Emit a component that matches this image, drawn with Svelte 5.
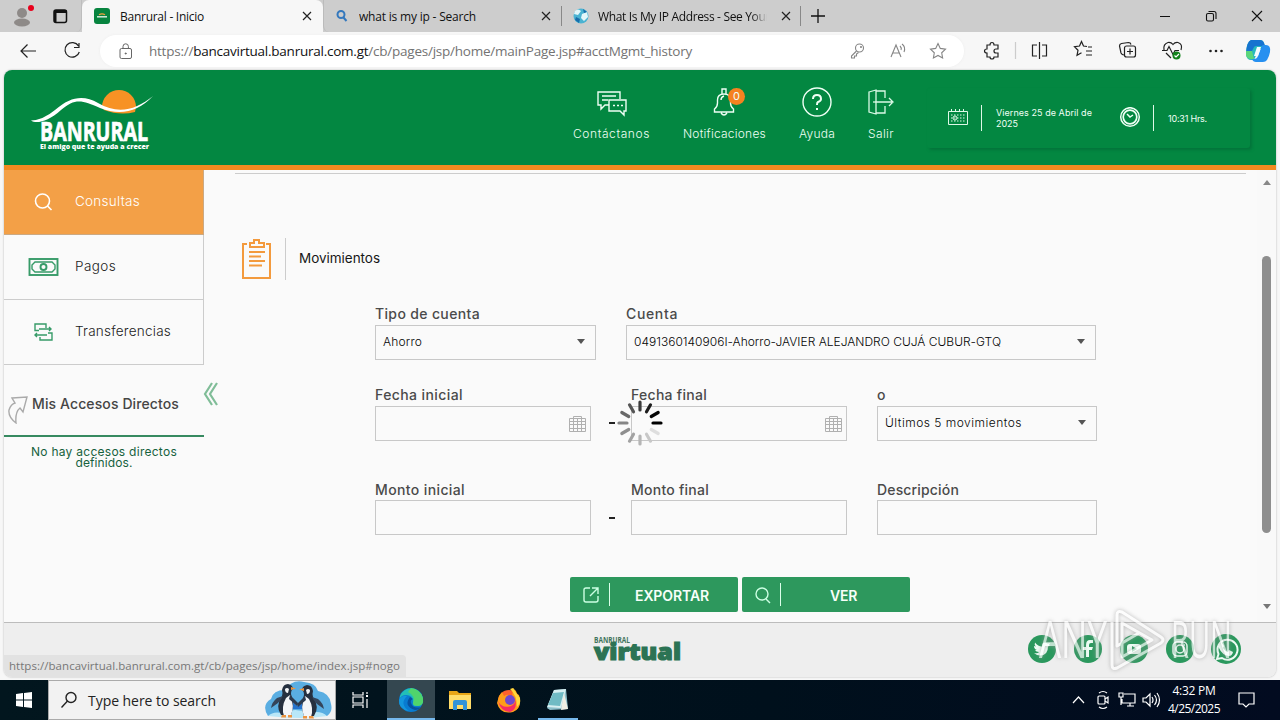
<script>
  // Spreads a label over the width given, by letter spacing.
  function fit(node, width) {
    const natural = node.getBoundingClientRect().width;
    node.style.letterSpacing = `${(width - natural) / node.textContent.length}px`;
  }
  const spokes = [
    [0, '#000'], [30, '#dedede'], [60, '#c8c8c8'], [90, '#b5b5b5'], [120, '#a2a2a2'], [150, '#8e8e8e'],
    [180, '#858585'], [210, '#696969'], [240, '#555'], [270, '#3c3c3c'], [300, '#1d1d1d'], [330, '#050505']
  ];
</script>

{#snippet calendar()}
  <svg class="cal" width="18" height="18" viewBox="0 0 18 18" fill="none" stroke="#b0b0b0"><path d="M1.500 3.500h16v13h-16zM1.500 6.500h16M1.500 9.500h16M1.500 13.500h16M5.500 3.500v13M9.500 3.500v13M13.500 3.500v13M5.500 3V1.500h8V3" /></svg>
{/snippet}
{#snippet closeX()}
  <svg class="x" width="10" height="10" viewBox="0 0 10 10" stroke="#222" stroke-width="1.2"><path d="M1 1l8 8M9 1L1 9" /></svg>
{/snippet}
{#snippet bird()}
  <path d="M17 34q-6-9 1-19 1-3 0-6 1-6 6-6 5 1 5 5-2 1-2 5 4 10 0 21z" fill="#26303f" />
  <path d="M20 35q-3-9 2-18l4-3q5 11 1 20-2 3-7 1zM21 8q2-2 4 0l-1 4q-3 0-3-4z" fill="#f3f5f8" />
  <path d="M19 15q-1 3-5 7l-7 5q1-6 6-10z" fill="#34445a" />
  <path d="M26 14l8 8-1 3-8-7z" fill="#2c3a4e" />
  <path d="M27 6l5 1.500-5 1.500zM18 34h4v2.500h-5zM24 34h4v2.500h-4z" fill="#ec9440" />
{/snippet}

<div class="screen">
  <div class="tabs">
    <div class="profile">
      <svg width="68" height="32" viewBox="0 0 68 32"><circle cx="22" cy="13" r="5" fill="#8e8a88" /><ellipse cx="22" cy="22.500" rx="8" ry="4" fill="#8e8a88" /><circle cx="31" cy="8" r="3" fill="#e8001c" /><rect x="54" y="10" width="12.500" height="12.500" rx="2" fill="none" stroke="#111" stroke-width="1.5" /><path d="M54 10h12.500v3H54zM54 11h2.500v11H54z" fill="#111" /></svg>
    </div>
    <div class="tab active">
      <svg width="16" height="16" viewBox="0 0 16 16"><rect width="16" height="16" rx="3" fill="#07843f" /><path d="M5 6.800q3-2 6 0" stroke="#f3a03b" stroke-width="1.200" fill="none" /><path d="M3 8.800h10" stroke="#d5ecdc" stroke-width="1.500" /></svg>
      <span class="title"><span use:fit={84}>Banrural - Inicio</span></span>{@render closeX()}
    </div>
    <div class="tab second">
      <svg width="14" height="14" viewBox="0 0 14 14" fill="none" stroke="#3478bd" stroke-width="2"><circle cx="5" cy="5.500" r="3.500" /><path d="M7.500 8.500l3 3.500" /></svg>
      <span class="title"><span use:fit={117}>what is my ip - Search</span></span>{@render closeX()}
    </div>
    <div class="tab third">
      <svg width="16" height="16" viewBox="0 0 16 16"><circle cx="8" cy="8" r="7.500" fill="#4bb3d2" /><path d="M2 3q3-3 6 0l-3 4-4-1zM9 6l5-2 1 5-4 4-3-3z" fill="#e3f7fa" /><path d="M3 9l4 2-1 4-4-3zM10 1l4 3-3 1z" fill="#176daa" /></svg>
      <span class="title fade"><span use:fit={172}>What Is My IP Address - See Your</span></span>{@render closeX()}
    </div>
    <svg class="plus" width="14" height="14" viewBox="0 0 14 14" stroke="#111" stroke-width="1.3"><path d="M7 0v14M0 7h14" /></svg>
    <svg class="win" width="103" height="14" viewBox="0 0 103 14" fill="none" stroke="#111" stroke-width="1.100"><path d="M0 7.500h10M92 2l10 10M102 2L92 12" /><rect x="46.500" y="4.500" width="7" height="7.500" rx="1.500" /><path d="M48.500 2.500h5.500q2 0 2 2V10" /></svg>
  </div>

  <div class="toolbar">
    <svg class="navs" width="64" height="20" viewBox="0 0 64 20" fill="none" stroke="#222" stroke-width="1.200"><path d="M17 10H2M8.500 3.500L2 10l6.500 6.500M59.500 5A7.300 7.300 0 1 0 60.300 11M60 2v4.500h-5" /></svg>
    <div class="address">
      <svg width="14" height="17" viewBox="0 0 14 17" fill="none" stroke="#666"><rect x="1" y="5.500" width="11.500" height="10" rx="1.500" /><path d="M4 5V3.500a2.700 2.700 0 0 1 5.400 0V5" /><circle cx="6.750" cy="10.500" r=".6" fill="#555" /></svg>
      <span class="url" use:fit={543}>https://<b>bancavirtual.banrural.com.gt</b>/cb/pages/jsp/home/mainPage.jsp#acctMgmt_history</span>
      <svg class="addricons" width="98" height="20" viewBox="0 0 98 20" fill="none" stroke="#858585" stroke-width="1.100"><circle cx="9.500" cy="7" r="4" /><circle cx="11" cy="6" r=".5" /><path d="M6.500 10L1.500 15v2h3v-2h2v-2l2-1.500M41 16l5-12 5 12M43 12h6M50 5q2 2 1 4M52 3q4 3 2 8M88 2.500l2.300 4.900 5.200.7-3.800 3.700.9 5.200-4.600-2.500-4.600 2.500.9-5.200-3.800-3.700 5.200-.7z" /></svg>
    </div>
    <svg class="tools" width="300" height="28" viewBox="0 0 300 28" fill="none" stroke="#222" stroke-width="1.200">
      <path d="M7 8h3q0-2.500 2-2.500T14 8h4v4h-2q-2 0-2 2t2 2h2v4h-4q0 2-2 2t-2-2H7v-4q-2.500 0-2.500-2T7 12z" />
      <path d="M35.500 5v17" stroke="#ccc" />
      <path d="M57 8h-4.500v11H57M62 8h4.500v11H62M59.500 5v17" />
      <g transform="translate(1 1)"><path d="M106 8.500l-3.500-.5-2-4.500-2 4.500-5 .7 3.500 3.600-1 5 4.500-2.500M107 9h4M105 13h6M105 17h6" />
      <path d="M143 17q-2 0-3-2l-1.500-7q0-2 2-2.500l7-1q2 0 2.500 2" /><rect x="143.500" y="8" width="11" height="11" rx="2" /><path d="M149 10.500v6M146 13.500h6" /></g>
      <path d="M184 13q-1-6 4-7.500 3-.5 5 2 2-2.500 5-2 5 1.500 3 7.500M182 13.500h5l2-4 4 8 2-4h4M186 16l5 5" /><circle cx="196.500" cy="18.500" r="4" fill="#12831b" stroke="none" /><path d="M194.500 18.500l1.500 1.500 3-3" stroke="#fff" />
      <g fill="#222" stroke="none"><circle cx="230.500" cy="14" r="1.300" /><circle cx="236" cy="14" r="1.300" /><circle cx="241.500" cy="14" r="1.300" /></g>
      <g stroke="none"><path d="M271 3h9q3 0 4 3l2 6h-7l-5 11h-3q-4 0-5-5 0-13 5-15z" fill="#28b9bd" /><path d="M271 3h9q3 0 4 3l1 3h-9q-2 0-3 3l-2 4h-5q1-12 5-13z" fill="#1774d0" /><path d="M283 8h3q5 0 4 7-2 10-7 10h-7q-3 0-4-3h2q3 0 4-3l3-8q1-3 2-3z" fill="#2790f0" /><path d="M266 14h6l2 8h-3q-4 0-5-4z" fill="#5dd67b" /><path d="M277 10h4l-3 9h-4z" fill="#f5fbff" /></g>
    </svg>
  </div>

  <div class="page">
    <header>
      <svg class="logo" width="124" height="64" viewBox="0 0 124 64">
        <path d="M71 19a17 17 0 0 1 34 0l-1 5q-15 4-31-2z" fill="#f79224" /><path d="M0 32.500Q12 32 24 22C40 8 53 7 67 15c20 12 38 7 55-7C107 24 89 28 69 20 51 12 44 10 30 22 17 34 5 36 0 32.500z" fill="#fff" />
        <text x="9" y="53" textLength="108" lengthAdjust="spacingAndGlyphs" class="brand">BANRURAL</text><text x="9" y="60.500" textLength="109" lengthAdjust="spacingAndGlyphs" class="motto">El amigo que te ayuda a crecer</text>
      </svg>
      <nav>
        <a><svg width="32" height="30" viewBox="0 0 32 30" fill="none" stroke="#effff5" stroke-width="1.400"><path d="M13 18H9l-4 4v-4H2V5h22v7M6 9h14M6 13h6" /><path d="M13 13h17v11h-2v4l-4-4H13z" /><path d="M17 18.500h2M21 18.500h2M25 18.500h2" /></svg><span use:fit={77}>Contáctanos</span></a>
        <a class="bell"><svg width="32" height="30" viewBox="0 0 32 30" fill="none" stroke="#effff5" stroke-width="1.400"><path d="M5.500 25v-3q3-2 3-6v-3q0-6 6.500-6t6.500 6v3q0 4 3 6v3zM13 7V2h4v5M12 13q0-3 3-4M12 26q3 4 6 0" /></svg><i>0</i><span use:fit={83}>Notificaciones</span></a>
        <a><svg width="32" height="30" viewBox="0 0 32 30" fill="none" stroke="#effff5" stroke-width="1.400"><circle cx="16" cy="15" r="14" /><path d="M12 12q0-4 4-4t4 4q0 2-3 3-1 .5-1 3M16 21v2" stroke-width="2" /></svg><span use:fit={36}>Ayuda</span></a>
        <a><svg width="32" height="30" viewBox="0 0 32 30" fill="none" stroke="#dbfae6" stroke-width="1.300"><path d="M11 4h9v7M20 19v7h-9M4 5l7-2v24l-7-2zM10 15h17M24 11l4 4-4 4M9 14v2" /></svg><span use:fit={26}>Salir</span></a>
      </nav>
      <div class="datebox">
        <svg width="22" height="18" viewBox="0 0 22 18" fill="none" stroke="#dff8e7"><path d="M1.500 2.500h19v13h-19zM4.500 0v3M8.500 0v3M12.500 0v3M16.500 0v3" /><path d="M4 6h14M4 9h14M4 12h14" stroke-dasharray="1.500 1.500" /><circle cx="8" cy="9" r="2" /></svg>
        <div class="vbar"></div>
        <div class="date"><span use:fit={96}>Viernes 25 de Abril de</span><br /><span use:fit={22}>2025</span></div>
        <svg width="22" height="22" viewBox="0 0 22 22" fill="none" stroke="#effff5"><circle cx="11" cy="10" r="9.300" stroke-width="1.500" /><circle cx="11" cy="10" r="6.800" stroke-width="1.700" /><path d="M8 7l3 3 3-2" stroke-width="1.500" /></svg>
        <div class="vbar two"></div><div class="hour"><span use:fit={39}>10:31 Hrs.</span></div>
      </div>
    </header>
    <div class="content">
      <aside>
        <div class="item on"><svg width="34" height="24" viewBox="0 0 34 24" fill="none" stroke="#fff" stroke-width="1.600"><circle cx="15.500" cy="11" r="7" /><path d="M20.500 16l4 4" /></svg><span use:fit={65}>Consultas</span></div>
        <div class="item"><svg width="34" height="24" viewBox="0 0 34 24" fill="none" stroke="#379b68" stroke-width="1.900"><rect x="2.500" y="4" width="28" height="16" /><path d="M8 7h17l3 3v4l-3 3H8l-3-3v-4z" stroke-width="1.400" /><circle cx="16.500" cy="12" r="3" /></svg><span use:fit={41}>Pagos</span></div>
        <div class="item"><svg width="34" height="24" viewBox="0 0 34 24" fill="none" stroke="#379b68" stroke-width="1.400"><path d="M12 10.500H8V4h11v4M12 9h12M22 7l2 2-2 2M8 15h12M10 13l-2 2 2 2M13 17v3h12v-7h-4" /></svg><span use:fit={96}>Transferencias</span></div>
        <div class="shortcuts"><svg width="24" height="30" viewBox="0 0 24 30" fill="none" stroke="#aaa" stroke-width="1.400"><path d="M7 4l15-1-4 15-3-4q-5 4-4 15Q3 23 4 16q2-6 6-7z" /></svg><span use:fit={147}>Mis Accesos Directos</span></div>
        <p><span use:fit={146}>No hay accesos directos</span><br /><span use:fit={57}>definidos.</span></p>
        <svg class="collapse" width="16" height="24" viewBox="0 0 16 24" fill="none" stroke="#80bd98" stroke-width="2.200"><path d="M10 1L3 12l7 11M15 1L8 12l7 11" /></svg>
      </aside>
      <main>
        <div class="rule"></div>
        <div class="heading"><svg width="30" height="42" viewBox="0 0 30 42" fill="none" stroke="#f39a3d" stroke-width="2"><path d="M5 6H1v34h27V6h-4M8 5h4V2h5v3h5v4H8zM7 14h16M7 18.500h12M7 23h16M7 27.500h13" /></svg><div class="line"></div><span use:fit={81}>Movimientos</span></div>
        <div class="form">
          <div class="row one">
            <div class="field"><label><span use:fit={105}>Tipo de cuenta</span></label><div class="box select"><span use:fit={39}>Ahorro</span><i></i></div></div>
            <div class="field"><label><span use:fit={52}>Cuenta</span></label><div class="box select"><span use:fit={367}>0491360140906I-Ahorro-JAVIER ALEJANDRO CUJÁ CUBUR-GTQ</span><i></i></div></div>
          </div>
          <div class="row two">
            <div class="field"><label><span use:fit={88}>Fecha inicial</span></label><div class="box">{@render calendar()}</div></div><b class="dash"></b>
            <div class="field"><label><span use:fit={76}>Fecha final</span></label><div class="box">{@render calendar()}</div></div>
            <div class="field last"><label><span>o</span></label><div class="box select"><span use:fit={137}>Últimos 5 movimientos</span><i></i></div></div>
          </div>
          <div class="row three">
            <div class="field"><label><span use:fit={90}>Monto inicial</span></label><div class="box"></div></div><b class="dash"></b>
            <div class="field"><label><span use:fit={78}>Monto final</span></label><div class="box"></div></div>
            <div class="field last"><label><span use:fit={82}>Descripción</span></label><div class="box"></div></div>
          </div>
        </div>
        <div class="buttons">
          <button><svg width="20" height="20" viewBox="0 0 20 20" fill="none" stroke="#ccffe3" stroke-width="1.400"><path d="M9 3H5Q3 3 3 5v10q0 2 2 2h10q2 0 2-2v-4M11 3h6v6M17 3l-8 8" /></svg><i></i><span class="bt"><span use:fit={74}>EXPORTAR</span></span></button>
          <button><svg width="20" height="20" viewBox="0 0 20 20" fill="none" stroke="#ccffe3" stroke-width="1.400"><circle cx="9" cy="9" r="6" /><path d="M13 14l4 4" /></svg><i></i><span class="bt"><span use:fit={27}>VER</span></span></button>
        </div>
        <svg class="loader" width="46" height="46" viewBox="-23 -23 46 46">{#each spokes as [angle, color]}<line x1="13" x2="21" y1="0" y2="0" stroke={color} stroke-width="3.200" stroke-linecap="round" transform={`rotate(${angle})`} />{/each}</svg>
      </main>
      <div class="scroll"><i class="up"></i><div class="thumb"></div><i class="down"></i></div>
    </div>
    <footer>
      <svg class="virtual" width="90" height="32" viewBox="0 0 90 32"><text x="1" y="7.500" textLength="36" lengthAdjust="spacingAndGlyphs" class="small">BANRURAL</text><text x="1" y="25" textLength="87" lengthAdjust="spacingAndGlyphs" class="big">virtual</text></svg>
      <div class="social">
        <svg viewBox="0 0 28 28"><circle cx="14" cy="14" r="14" /><path d="M6 18q4 1 5-1-3 0-4-2h2q-3-1-3-4l2 .5q-2-2-1-4 3 4 7 4 0-4 3-4l3 1 2-.5-1 2 1 .5-2 1q0 9-8 9-3 0-6-2.500z" fill="#eefdf5" /></svg>
        <svg viewBox="0 0 28 28"><circle cx="14" cy="14" r="14" /><path d="M12 22v-7H9v-3h3v-2q0-5 4-5h3v3h-2q-2 0-2 2v2h4l-1 3h-3v7z" fill="#eefdf5" /></svg>
        <svg viewBox="0 0 28 28"><circle cx="14" cy="14" r="14" /><rect x="7" y="9" width="14" height="10" rx="3" fill="#eefdf5" /><path d="M12 11l5 3-5 3z" /></svg>
        <svg viewBox="0 0 28 28"><circle cx="14" cy="14" r="14" /><g fill="none" stroke="#eefdf5" stroke-width="1.500"><rect x="7" y="7" width="14" height="14" rx="4" /><circle cx="14" cy="14" r="4" /><path d="M18 10h1" /></g></svg>
        <svg class="wa" viewBox="0 0 30 30"><circle cx="15" cy="15" r="15" /><path d="M6 25l1.500-5A10 10 0 1 1 11 24z" fill="none" stroke="#eefdf5" stroke-width="2" /><path d="M11 9l2 3-1 2q2 3 5 4l1-2 4 2q-1 4-4 4-7-1-10-8-1-4 2-5z" fill="#eefdf5" /></svg>
      </div>
    </footer>
    <div class="status"><span use:fit={391}>https://bancavirtual.banrural.com.gt/cb/pages/jsp/home/index.jsp#nogo</span></div>
  </div>

  <div class="taskbar">
    <div class="start"><svg width="16" height="16" viewBox="0 0 16 16" fill="#fff"><path d="M0 2l7-1v6.500H0zM8 1l8-1v7.500H8zM0 8.500h7V15l-7-1zM8 8.500h8V16l-8-1z" /></svg></div>
    <div class="search"><svg width="18" height="18" viewBox="0 0 18 18" fill="none" stroke="#222" stroke-width="1.400"><circle cx="11" cy="6.500" r="5" /><path d="M7.500 10L1.500 16.500" /></svg><span use:fit={128}>Type here to search</span>
      <svg class="penguins" width="68" height="38" viewBox="0 0 68 38"><path d="M4 35Q-3 24 7 18q2-9 14-9Q28-2 40 1q12 1 14 9 12 2 13 13 2 8-4 12z" fill="#5aaee2" /><path d="M4 35q5-5 14-3 13-6 27 0 12-3 18 3-25 4-59 0z" fill="#b9e7f8" /><path d="M27 28l1-7 5 4 6-4 1 7z" fill="#2573cc" />
        <g>{@render bird()}</g><g transform="translate(67 1) scale(-1 1)">{@render bird()}</g></svg>
    </div>
    <div class="view"><svg width="18" height="18" viewBox="0 0 18 18" fill="none" stroke="#fff" stroke-width="1.200"><path d="M1 1v3h10V1M1 17v-3h10v3M1 6h10v6H1zM15 1v2M15 8v9" /><path d="M14 5h2" stroke-width="2" /></svg></div>
    <div class="app current"><svg width="26" height="26" viewBox="0 0 26 26"><circle cx="13" cy="13" r="12" fill="#087bd0" /><path d="M2 9Q7-1 17 2q8 3 8 12 0 5-7 5-4 0-3-4 0-7-7-7-4 0-6 3z" fill="#22bfb7" /><path d="M13 1q9 1 12 10 1 8-5 8-5 0-5-3 3-7-5-11z" fill="#50d46c" /><path d="M9 9q-8 8 2 15Q0 22 1 13q3-5 8-4z" fill="#1396dd" /><path d="M12 10q-7 9 5 13 4 0 6-3-8 2-10-4-1-3 2-4z" fill="#0752a0" /></svg></div>
    <div class="app"><svg width="24" height="24" viewBox="0 0 24 24"><path d="M1 3h8l2 2h12v16H1z" fill="#e8a516" /><path d="M1 7h22v14H1z" fill="#ffdc69" /><path d="M5 22v-8q0-2 2-2h10q2 0 2 2v8h-4v-5H9v5z" fill="#3193d8" /></svg></div>
    <div class="app"><svg width="26" height="26" viewBox="0 0 26 26"><circle cx="13" cy="14" r="11" fill="#ff612d" /><path d="M3 9l3-4 2 4q5-3 8 1l1-9q3 2 4 6l2 1q4 13-6 17-13 3-16-9z" fill="#ff9d19" /><path d="M14 2l3-1 4 6 3 4q1 6-3 9 0-12-7-18z" fill="#ffd83d" /><path d="M2 14q4 8 13 5 5-2 4-7 3 10-5 13-9 0-12-11z" fill="#f72c63" /><circle cx="14" cy="13" r="5" fill="#7048cf" /></svg></div>
    <div class="app note"><svg width="26" height="26" viewBox="0 0 26 26"><path d="M9 3l12-1 2 20-18 1-3-2z" fill="#8dbfca" /><path d="M9 3l12-1-5 19-14-1z" fill="#d7eff1" /><path d="M8 6l11-1-4 14-12-1z" fill="#70bbc4" /><path d="M19 6l4 16-7 1z" fill="#f0eee3" /></svg></div>
    <svg class="tray" width="90" height="22" viewBox="0 0 90 22" fill="none" stroke="#fff" stroke-width="1.200"><path d="M1 14l5.500-6 5.500 6M27 4q4-3 8 0M27 18q4 3 8 0" /><rect x="26" y="7" width="7" height="8" rx="1" /><path d="M33 10l3-2v6l-3-2M52 5h11v9H50V10M55 17h7M58 14v3M47 4h4v4h-4zM49 8v8M71 9h3l4-4v12l-4-4h-3zM80 8q2 3 0 6M82.500 6q4 5 0 10M85 4q5 7 0 14" /></svg>
    <div class="clock"><span use:fit={43}>4:32 PM</span><span use:fit={52}>4/25/2025</span></div>
    <svg class="notice" width="18" height="18" viewBox="0 0 18 18" fill="none" stroke="#fff" stroke-width="1.200"><path d="M1 2h15v11h-5l-3 3-3-3H1z" /></svg>
  </div>
  <svg class="watermark" width="210" height="80" viewBox="0 0 210 80"><text x="9" y="55" textLength="68" lengthAdjust="spacingAndGlyphs">ANY</text><text x="141" y="55" textLength="61" lengthAdjust="spacingAndGlyphs">RUN</text><path d="M82 19v43q0 5 5 3l44-25q4-3 0-6L92 9q-5-2-5 3v31l22-13M92 20v34l30-17z" /></svg>
</div>

<style>
  :global(body) { margin: 0; overflow: hidden; }
  * { box-sizing: border-box; }
  .screen { position: relative; width: 1280px; height: 720px; display: flex; flex-direction: column; background: #f7f7f7; font-family: "Open Sans", sans-serif; overflow: hidden; }
  span { white-space: nowrap; }
  svg { flex-shrink: 0; }
  .tabs { height: 32px; flex-shrink: 0; background: #cdcdcd; display: flex; align-items: center; font-size: 12px; color: #111; }
  .profile { width: 82px; height: 32px; border-right: 1px solid #bdbdbd; border-radius: 0 0 6px; }
  .tab { height: 32px; display: flex; align-items: center; }
  .active { width: 241px; background: #f7f7f7; padding: 0 11px 0 12px; border-radius: 7px 7px 0 0; }
  .title { flex: 1; margin-left: 10px; overflow: hidden; }
  .fade { -webkit-mask: linear-gradient(90deg, #000 91%, transparent); mask: linear-gradient(90deg, #000 91%, transparent); }
  .second { width: 238px; padding: 0 10px 0 12px; border-left: 1px solid #bbb; border-radius: 0 0 0 6px; }
  .second .title { margin-left: 9px; }
  .third { width: 240px; padding: 0 10px 0 12px; background: linear-gradient(#888, #888) 0 6px/1px 20px no-repeat, linear-gradient(#888, #888) 239px 6px/1px 20px no-repeat; }
  .third .title { margin: 0 14px 0 9px; }
  .plus { margin-left: 10px; }
  .win { margin-left: 335px; }
  .toolbar { height: 38px; flex-shrink: 0; display: flex; align-items: center; padding-left: 19px; }
  .address { width: 864px; height: 32px; margin-left: 17px; border-radius: 16px; background: #fff; display: flex; align-items: center; padding-left: 19px; box-shadow: 0 0 3px #eee; flex-shrink: 0; }
  .url { font-size: 13.500px; color: #737373; margin-left: 16px; line-height: 20px; }
  .url b { font-weight: 400; color: #111; }
  .addricons { margin-left: 158px; }
  .tools { margin-left: 16px; }
  .page { position: relative; height: 607px; margin: 0 4px 3px; border-radius: 8px; overflow: hidden; background: #fafafa; display: flex; flex-direction: column; font-family: Inter, sans-serif; box-shadow: 0 0 2px #aaa; }
  header { height: 100px; flex-shrink: 0; background: #038741; border-bottom: 5px solid #f38a20; display: flex; color: #effff5; }
  .logo { margin: 18px 0 0 27px; }
  .brand { font: 700 26px "Open Sans", sans-serif; fill: #fff; stroke: #fff; stroke-width: .7px; }
  .motto { font: 800 7px "Open Sans", sans-serif; fill: #fff; }
  nav { display: flex; gap: 33px; margin: 17px 0 0 418px; }
  nav a { display: flex; flex-direction: column; align-items: center; font-size: 12px; font-weight: 300; line-height: 18px; position: relative; }
  nav a > svg { margin: 0 -4px 8px; }
  .bell i { position: absolute; left: 45px; top: 1px; width: 17px; height: 17px; border-radius: 9px; background: #f58220; text-align: center; font: 11px/17px Inter, sans-serif; }
  .datebox { margin: 18px 0 0 33px; width: 323px; height: 60px; border-radius: 3px; box-shadow: 2px 2px 3px #03743a; display: flex; align-items: center; padding: 0 0 0 20px; font-size: 9px; line-height: 11px; }
  .vbar { width: 1px; height: 26px; background: #dff8e7; margin: 0 14px 0 12px; }
  .date { width: 123px; }
  .vbar.two { margin-left: 12px; }
  .content { height: 452px; display: flex; flex-shrink: 0; }
  aside { width: 200px; position: relative; }
  .item { height: 65px; display: flex; align-items: center; border: solid #ccc; border-width: 0 1px 1px 0; font-size: 13.500px; font-weight: 300; color: #222; padding-left: 23px; }
  .item span { margin-left: 14px; margin-top: -2px; }
  .on { background: #f3a047; color: #fff; border-color: #cba983; }
  .shortcuts { height: 72px; border-bottom: 2px solid #378a60; display: flex; align-items: center; font-size: 14px; font-weight: 500; color: #454545; padding: 18px 0 0 1px; }
  .shortcuts span { margin: -12px 0 0 3px; }
  p { margin: 9px 0 0; text-align: center; font-size: 12px; line-height: 11px; color: #16613d; }
  .collapse { position: absolute; left: 198px; top: 212px; }
  main { width: 1053px; position: relative; }
  .rule { margin: 3px 11px 0 31px; height: 1px; background: #ccc; }
  .heading { display: flex; align-items: center; margin: 64px 0 0 38px; height: 42px; font-size: 13.500px; color: #171717; }
  .heading span { margin-top: -2px; }
  .line { width: 1px; height: 42px; background: #ccc; margin: 0 13px 0 13px; }
  .form { margin: 24px 0 0 171px; color: #4a4a4a; }
  .row { display: flex; height: 81px; }
  .row.two { height: 95px; }
  .row.three { height: 92px; }
  .field { width: 216px; flex-shrink: 0; }
  label { display: block; font-size: 14px; font-weight: 450; line-height: 20px; height: 21px; }
  .three label { height: 20px; }
  .one .field { width: 221px; }
  .one .field + .field { width: 470px; margin-left: 30px; }
  .last { width: 220px; margin-left: 30px; }
  .box { height: 35px; border: 1px solid #c8c8c8; display: flex; align-items: center; justify-content: flex-end; padding: 0 4px; background: #fafafa; }
  .select { justify-content: space-between; padding: 0 10px 0 7px; font-size: 12px; font-weight: 300; color: #050505; }
  .select span { margin-top: -2px; }
  .select i, .up, .down { width: 0; height: 0; border: 4.500px solid transparent; border-top: 5px solid #555; border-bottom: 0; }
  .select i { margin-top: -2px; }
  .dash { width: 6px; height: 2px; background: #222; margin: 37px 16px 0 18px; }
  .buttons { display: flex; gap: 4px; margin: 5px 0 0 366px; }
  button { width: 168px; height: 35px; border: 0; border-radius: 2px; background: #2d985d; color: #f7fff9; display: flex; align-items: center; padding: 0 4px 0 11px; font: 600 14px Inter, sans-serif; }
  button i { width: 1px; height: 23px; background: #dcffea; margin-left: 8px; }
  button + button i { margin-left: 7px; }
  .bt { flex: 1; text-align: center; padding-top: 1px; }
  .loader { position: absolute; left: 413px; top: 230px; }
  .scroll { width: 19px; display: flex; flex-direction: column; align-items: center; background: #f9f9f9; padding-top: 10px; }
  .up { transform: rotate(180deg); border-top-color: #888; }
  .thumb { width: 9px; height: 277px; border-radius: 5px; background: #8e8e8e; margin: 71px 0; }
  .down { border-top-color: #777; }
  footer { height: 55px; border-top: 1px solid #bcbcbc; background: #eee; display: flex; }
  .virtual { margin: 12px 0 0 589px; }
  .small { font: 700 8.500px "Open Sans", sans-serif; fill: #42745c; }
  .big { font: 800 22.500px "Open Sans", sans-serif; fill: #2c7354; stroke: #2c7354; stroke-width: 1.200px; }
  .social { display: flex; gap: 18px; margin: 12px 0 0 345px; }
  .social svg { width: 28px; height: 28px; fill: #2a985d; }
  .social .wa { width: 30px; height: 30px; margin: -1px 0 0 -1px; }
  .status { position: absolute; left: 0; bottom: 0; width: 402px; height: 22px; background: #e2e2e2; color: #777; font: 11.500px/21px "Open Sans", sans-serif; padding-left: 5px; border-radius: 0 4px 0 0; }
  .taskbar { height: 40px; flex-shrink: 0; background: linear-gradient(90deg, #02161e, #00101c 60%, #020b20); display: flex; align-items: center; }
  .start { width: 48px; display: flex; justify-content: center; }
  .search { width: 288px; height: 40px; background: #f2f2f2; border: 1px solid #aaa; display: flex; align-items: center; padding-left: 11px; font-size: 14px; color: #222; }
  .search span { margin-left: 10px; }
  .penguins { margin-left: 48px; }
  .view { width: 51px; display: flex; justify-content: center; padding-right: 2px; }
  .app { width: 48px; height: 40px; display: flex; align-items: center; justify-content: center; margin-right: 1px; }
  .current { background: #344750; box-shadow: inset 0 -2px #76b9ed; }
  .note { background: linear-gradient(#76b9ed, #76b9ed) 4px 38px/40px 2px no-repeat; }
  .tray { margin-left: 489px; }
  .clock { width: 54px; margin-left: 5px; display: flex; flex-direction: column; align-items: center; font-size: 12px; line-height: 18px; color: #fff; }
  .notice { margin-left: 17px; }
  .watermark { position: absolute; left: 1030px; top: 603px; opacity: .7; filter: drop-shadow(0 0 2px #999); }
  .watermark text { font: 400 52px "Open Sans", sans-serif; fill: #fff; }
  .watermark path { fill: none; stroke: #fff; stroke-width: 3; stroke-linejoin: round; }
</style>
